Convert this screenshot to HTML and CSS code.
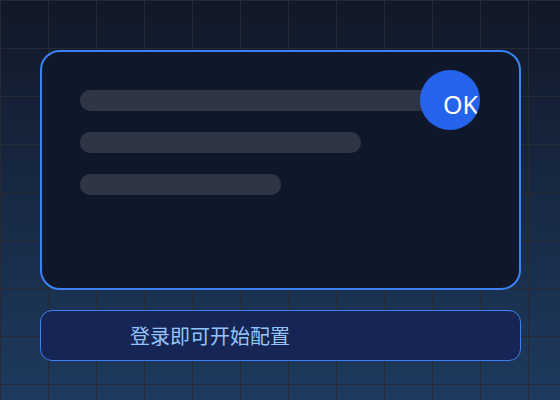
FILE: index.html
```html
<!DOCTYPE html>
<html lang="zh-CN">
<head>
<meta charset="utf-8">
<title>配置</title>
<link rel="stylesheet" href="styles.css">
</head>
<body>
<div class="page">
  <div class="card">
    <div class="bars">
      <div class="bar bar-long"></div>
      <div class="bar bar-mid"></div>
      <div class="bar bar-short"></div>
    </div>
    <div class="badge">OK</div>
  </div>
  <div class="notice">登录即可开始配置</div>
</div>
</body>
</html>
```

FILE: styles.css
```css
html, body {
  margin: 0;
  padding: 0;
}
body {
  width: 560px;
  height: 400px;
  overflow: hidden;
  font-family: "Noto Sans", "Noto Sans CJK SC", sans-serif;
  background-color: #111827;
  background-image:
    linear-gradient(to right, #252a34 1px, transparent 1px),
    linear-gradient(to bottom, #252a34 1px, transparent 1px),
    linear-gradient(to bottom, #111827, #1e3a5f);
  background-size: 48px 48px, 48px 48px, 100% 100%;
}
.page {
  box-sizing: border-box;
  padding: 50px 39px 0 40px;
  display: flex;
  flex-direction: column;
  gap: 20px;
}
.card {
  position: relative;
  box-sizing: border-box;
  height: 240px;
  border: 2px solid #3b82f6;
  border-radius: 20px;
  background: #0f172a;
  padding: 38px;
}
.bars {
  display: flex;
  flex-direction: column;
  gap: 21px;
}
.bar {
  height: 21px;
  border-radius: 10px;
  background: #2e3646;
}
.bar-long { width: 360px; }
.bar-mid { width: 281px; }
.bar-short { width: 201px; }
.badge {
  position: absolute;
  top: 18px;
  right: 39px;
  width: 60px;
  height: 60px;
  box-sizing: border-box;
  border-radius: 50%;
  background: #2563eb;
  color: #ffffff;
  font-size: 25px;
  line-height: 60px;
  padding-left: 23px;
  padding-top: 4px;
  white-space: nowrap;
  overflow: hidden;
}
.notice {
  box-sizing: border-box;
  border: 1px solid #3b82f6;
  border-radius: 12px;
  background: #172554;
  color: #93c5fd;
  font-family: "Noto Sans CJK SC", sans-serif;
  font-size: 20px;
  padding: 10px 20px 10px 89px;
}
```
